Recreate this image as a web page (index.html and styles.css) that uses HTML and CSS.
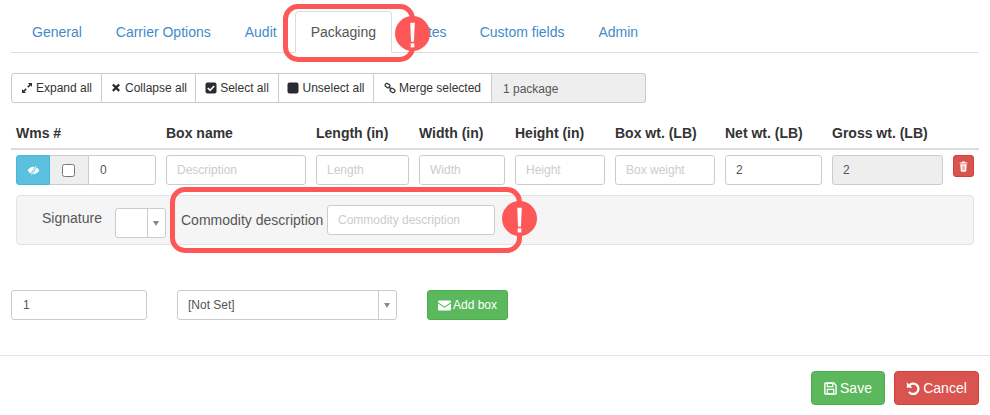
FILE: index.html
```html
<!DOCTYPE html>
<html lang="en">
<head>
<meta charset="utf-8">
<title>Packaging</title>
<link rel="stylesheet" href="styles.css">
</head>
<body>
<ul class="tabs">
  <li><a href="#">General</a></li>
  <li><a href="#">Carrier Options</a></li>
  <li><a href="#">Audit</a></li>
  <li class="active"><a href="#">Packaging</a></li>
  <li class="tab-notes"><a href="#">Notes</a></li>
  <li><a href="#">Custom fields</a></li>
  <li><a href="#">Admin</a></li>
</ul>

<div class="toolbar">
  <button class="tool tool-expand"><svg class="ico" viewBox="0 0 12 12"><path d="M7 1h4v4L9.600 3.600 7.400 5.800 6.200 4.600 8.400 2.400zM5 11H1V7l1.400 1.400 2.200-2.200 1.200 1.200-2.200 2.200z" fill="#333"/></svg>Expand all</button>
  <button class="tool tool-collapse"><svg class="ico" viewBox="0 0 12 12"><path d="M2.400 3.200L3.600 2 6 4.300 8.400 2l1.300 1.200L7.300 5.700l2.400 2.400-1.300 1.300L6 7 3.600 9.400 2.400 8.100l2.400-2.400z" fill="#222" stroke="#222" stroke-width=".5"/></svg>Collapse all</button>
  <button class="tool tool-select"><svg class="ico" viewBox="0 0 12 12"><rect x=".5" y=".5" width="11" height="11" rx="2" fill="#2a2a33"/><path d="M2.800 6l2.300 2.300L9.200 4" fill="none" stroke="#fff" stroke-width="1.700"/></svg>Select all</button>
  <button class="tool tool-unselect"><svg class="ico" viewBox="0 0 12 12"><rect x=".5" y=".5" width="11" height="11" rx="2" fill="#2a2a33"/></svg>Unselect all</button>
  <button class="tool tool-merge"><svg class="ico" viewBox="0 0 12 12"><g fill="none" stroke="#333" stroke-width="1.200"><rect x="1" y="1.800" width="5" height="3.600" rx="1.700" transform="rotate(35 3.500 3.600)"/><rect x="6" y="6.600" width="5" height="3.600" rx="1.700" transform="rotate(35 8.500 8.400)"/><path d="M4.600 4.600l2.800 2.800"/></g></svg>Merge selected</button>
  <div class="tool-status">1 package</div>
</div>

<div class="grid grid-head">
  <div>Wms #</div><div>Box name</div><div>Length (in)</div><div>Width (in)</div><div>Height (in)</div><div>Box wt. (LB)</div><div>Net wt. (LB)</div><div>Gross wt. (LB)</div><div></div>
</div>

<div class="grid grid-row">
  <div class="wms">
    <button class="eye"><svg viewBox="0 0 14 12" width="13" height="11"><path d="M7 2c3 0 5.200 2 6.300 4-1.100 2-3.300 4-6.300 4S1.800 8 .7 6C1.800 4 4 2 7 2z" fill="#fff"/><path d="M10 .8L4.500 11" stroke="#5bc0de" stroke-width="2.200"/><path d="M9.800 1L4.800 10.800" stroke="#fff" stroke-width=".9"/></svg></button>
    <span class="check"><input type="checkbox"></span>
    <input class="field wms-input" type="text" value="0">
  </div>
  <input class="field" type="text" placeholder="Description">
  <input class="field" type="text" placeholder="Length">
  <input class="field" type="text" placeholder="Width">
  <input class="field" type="text" placeholder="Height">
  <input class="field" type="text" placeholder="Box weight">
  <input class="field" type="text" value="2">
  <input class="field field-off" type="text" value="2" readonly>
  <button class="trash"><svg viewBox="0 0 12 12" width="11" height="11"><path d="M4 1.500L4.600 .6h2.800l.6.900h2.200v1.300H1.800V1.500zM2.500 3.500h7l-.5 7.300a.9.900 0 0 1-.9.800H3.900a.9.900 0 0 1-.9-.8z" fill="#fff"/><path d="M4.700 5v5M6 5v5M7.300 5v5" stroke="#d9534f" stroke-width=".5"/></svg></button>
</div>

<div class="well">
  <span class="sig-label">Signature</span>
  <div class="combo combo-sig"><span class="combo-text"></span><span class="combo-arrow"></span></div>
  <label class="com-label">Commodity description</label>
  <input class="field com-input" type="text" placeholder="Commodity description">
</div>

<div class="add-row">
  <input class="field add-qty" type="text" value="1">
  <div class="combo combo-type"><span class="combo-text">[Not Set]</span><span class="combo-arrow"></span></div>
  <button class="btn-add"><svg class="ico-w" viewBox="0 0 13 11" width="13" height="11"><path d="M0 2.200V1.500A1.200 1.200 0 0 1 1.200.5h10.600A1.200 1.200 0 0 1 13 1.500v.7L6.500 6.400z" fill="#fff"/><path d="M0 3.500v6A1.200 1.200 0 0 0 1.200 10.500h10.600A1.200 1.200 0 0 0 13 9.500v-6L6.500 7.700z" fill="#fff"/></svg>Add box</button>
</div>

<div class="footer">
  <button class="btn btn-save"><svg class="ico-f" viewBox="0 0 14 14" width="13" height="13"><path d="M1.700 1h8.800L13 3.500v8.800a.8.800 0 0 1-.8.800H1.700a.8.800 0 0 1-.8-.8V1.800a.8.800 0 0 1 .8-.8z" fill="none" stroke="#fff" stroke-width="1.500"/><path d="M3.500 1.500h6v3.500h-6zM3.500 8h7v4.500h-7z" fill="none" stroke="#fff" stroke-width="1.300"/></svg>Save</button>
  <button class="btn btn-cancel"><svg class="ico-c" viewBox="0 0 14 14" width="14" height="14"><path d="M3 4.800A5.200 5.200 0 1 1 3 10.800" fill="none" stroke="#fff" stroke-width="2.300"/><path d="M.8 1.200v5.600h5.600z" fill="#fff"/></svg>Cancel</button>
</div>

<div class="mark mark-tab"></div>
<div class="mark mark-com"></div>
<svg class="alert alert-tab" viewBox="0 0 34 34"><circle cx="17" cy="17" r="17" fill="#fe5757"/><path d="M14.800 6.500h4.400l-.8 18.500h-2.800z" fill="#fff"/><rect x="15.200" y="26.500" width="3.600" height="4" fill="#fff"/></svg>
<svg class="alert alert-com" viewBox="0 0 34 34"><circle cx="17" cy="17" r="17" fill="#fe5757"/><path d="M14.800 6.500h4.400l-.8 18.500h-2.800z" fill="#fff"/><rect x="15.200" y="26.500" width="3.600" height="4" fill="#fff"/></svg>
</body>
</html>
```

FILE: styles.css
```css
* { box-sizing: border-box; }
html, body { margin: 0; padding: 0; }
body {
  position: relative;
  width: 990px;
  height: 415px;
  overflow: hidden;
  background: #fff;
  color: #333;
  font: 14px/20px "Liberation Sans", Arial, sans-serif;
}
button { font-family: inherit; cursor: pointer; }

/* tabs */
.tabs {
  display: flex;
  list-style: none;
  margin: 11px 12px 0 11px;
  padding: 0 0 0 5px;
  border-bottom: 1px solid #ddd;
}
.tabs li { margin: 0 2px -1px 0; }
.tabs .tab-notes { margin-right: 1px; }
.tabs a {
  display: block;
  padding: 10px 15px;
  border: 1px solid transparent;
  border-radius: 4px 4px 0 0;
  color: #428bca;
  text-decoration: none;
}
.tabs .active a {
  color: #555;
  background: #fff;
  border-color: #ddd #ddd #fff;
}

/* toolbar */
.toolbar { display: flex; height: 30px; margin: 20px 0 0 11px; width: 635px; }
.tool {
  display: flex;
  align-items: center;
  justify-content: center;
  height: 30px;
  padding: 0;
  margin: 0;
  font-size: 12px;
  line-height: 18px;
  color: #333;
  background: #fff;
  border: 1px solid #ccc;
  border-left-width: 0;
}
.tool-expand { width: 91px; border-left-width: 1px; border-radius: 3px 0 0 3px; }
.tool-collapse { width: 94px; }
.tool-select { width: 83px; }
.tool-unselect { width: 95px; }
.tool-merge { width: 118px; }
.ico { width: 12px; height: 12px; margin-right: 3px; flex: none; }
.tool-status {
  flex: 1;
  height: 30px;
  padding: 5px 11px;
  font-size: 12px;
  color: #555;
  background: #eee;
  border: 1px solid #ccc;
  border-left: 0;
  border-radius: 0 3px 3px 0;
}

/* grid */
.grid {
  display: grid;
  grid-template-columns: 140px 140px 93px 86px 90px 100px 97px 111px 21px;
  column-gap: 10px;
}
.grid-head {
  width: 968px;
  height: 32px;
  margin: 15px 0 0 11px;
  padding: 5px 0 0 5px;
  font-weight: 700;
  border-bottom: 2px solid #ddd;
}
.grid-row { margin: 5px 0 0 16px; align-items: start; }
.field {
  display: block;
  width: 100%;
  height: 30px;
  padding: 5px 10px;
  font: 12px/18px "Liberation Sans", Arial, sans-serif;
  color: #555;
  background: #fff;
  border: 1px solid #ccc;
  border-radius: 3px;
  outline: 0;
  min-width: 0;
}
.field::placeholder { color: #ccc; opacity: 1; }
.field-off { background: #eee; }
.wms { display: flex; height: 30px; }
.eye {
  display: flex;
  align-items: center;
  justify-content: center;
  width: 34px;
  height: 30px;
  padding: 0;
  background: #5bc0de;
  border: 1px solid #46b8da;
  border-radius: 3px 0 0 3px;
}
.check {
  display: flex;
  align-items: center;
  justify-content: center;
  width: 38px;
  background: #eee;
  border: 1px solid #ccc;
  border-width: 1px 0;
}
.check input { margin: 0 2px 0 0; width: 13px; height: 13px; }
.wms-input { width: 68px; flex: none; border-radius: 0 3px 3px 0; padding-left: 11px; }
.trash {
  display: flex;
  align-items: center;
  justify-content: center;
  width: 21px;
  height: 22px;
  padding: 0;
  background: #d9534f;
  border: 1px solid #d43f3a;
  border-radius: 3px;
}

/* well */
.well {
  display: flex;
  align-items: flex-start;
  width: 958px;
  height: 50px;
  margin: 10px 0 0 16px;
  padding: 0 0 0 25px;
  color: #555;
  background: #f5f5f5;
  border: 1px solid #e3e3e3;
  border-radius: 4px;
}
.sig-label { width: 73px; margin-top: 12px; flex: none; }
.com-label { width: 146px; margin: 14px 0 0 15px; flex: none; }
.com-input { width: 168px; margin-top: 9px; flex: none; }
.combo {
  display: flex;
  height: 30px;
  background: #fff;
  border: 1px solid #ccc;
  border-radius: 3px;
  font-size: 12px;
  line-height: 28px;
  color: #555;
  flex: none;
}
.combo-text { flex: 1; padding-left: 10px; }
.combo-arrow {
  position: relative;
  width: 18px;
  border-left: 1px solid #ccc;
}
.combo-arrow::after {
  content: "";
  position: absolute;
  left: 5px;
  top: 12px;
  border: 3px solid transparent;
  border-width: 5px 3px 0;
  border-top-color: #888;
}
.combo-sig { width: 51px; margin-top: 12px; }
.combo-type { width: 220px; }

/* add row */
.add-row { display: flex; margin: 45px 0 0 11px; gap: 30px; }
.add-qty { width: 136px; padding-left: 11px; }
.btn-add {
  display: flex;
  align-items: center;
  justify-content: center;
  width: 81px;
  height: 30px;
  padding: 0;
  font-size: 12px;
  color: #fff;
  background: #5cb85c;
  border: 1px solid #4cae4c;
  border-radius: 3px;
}
.ico-w { margin-right: 2px; }

/* footer */
.footer {
  display: flex;
  justify-content: flex-end;
  gap: 9px;
  margin-top: 35px;
  padding: 15px 11px 0 0;
  border-top: 1px solid #e5e5e5;
}
.btn {
  display: flex;
  align-items: center;
  justify-content: center;
  height: 34px;
  padding: 0;
  font-size: 14px;
  color: #fff;
  border: 1px solid;
  border-radius: 4px;
}
.ico-f { margin-right: 3px; }
.ico-c { margin-right: 3px; }
.btn-save { width: 74px; background: #5cb85c; border-color: #4cae4c; }
.btn-cancel { width: 85px; background: #d9534f; border-color: #d43f3a; }

/* red annotations laid over the page */
.mark {
  position: absolute;
  border: 5px solid #fe5757;
  border-radius: 15px;
}
.mark-tab { left: 283px; top: 4px; width: 132px; height: 58px; }
.mark-com { left: 170px; top: 187px; width: 352px; height: 66px; }
.alert { position: absolute; width: 35px; height: 35px; }
.alert-tab { left: 395px; top: 16px; }
.alert-com { left: 502px; top: 201px; }
```
